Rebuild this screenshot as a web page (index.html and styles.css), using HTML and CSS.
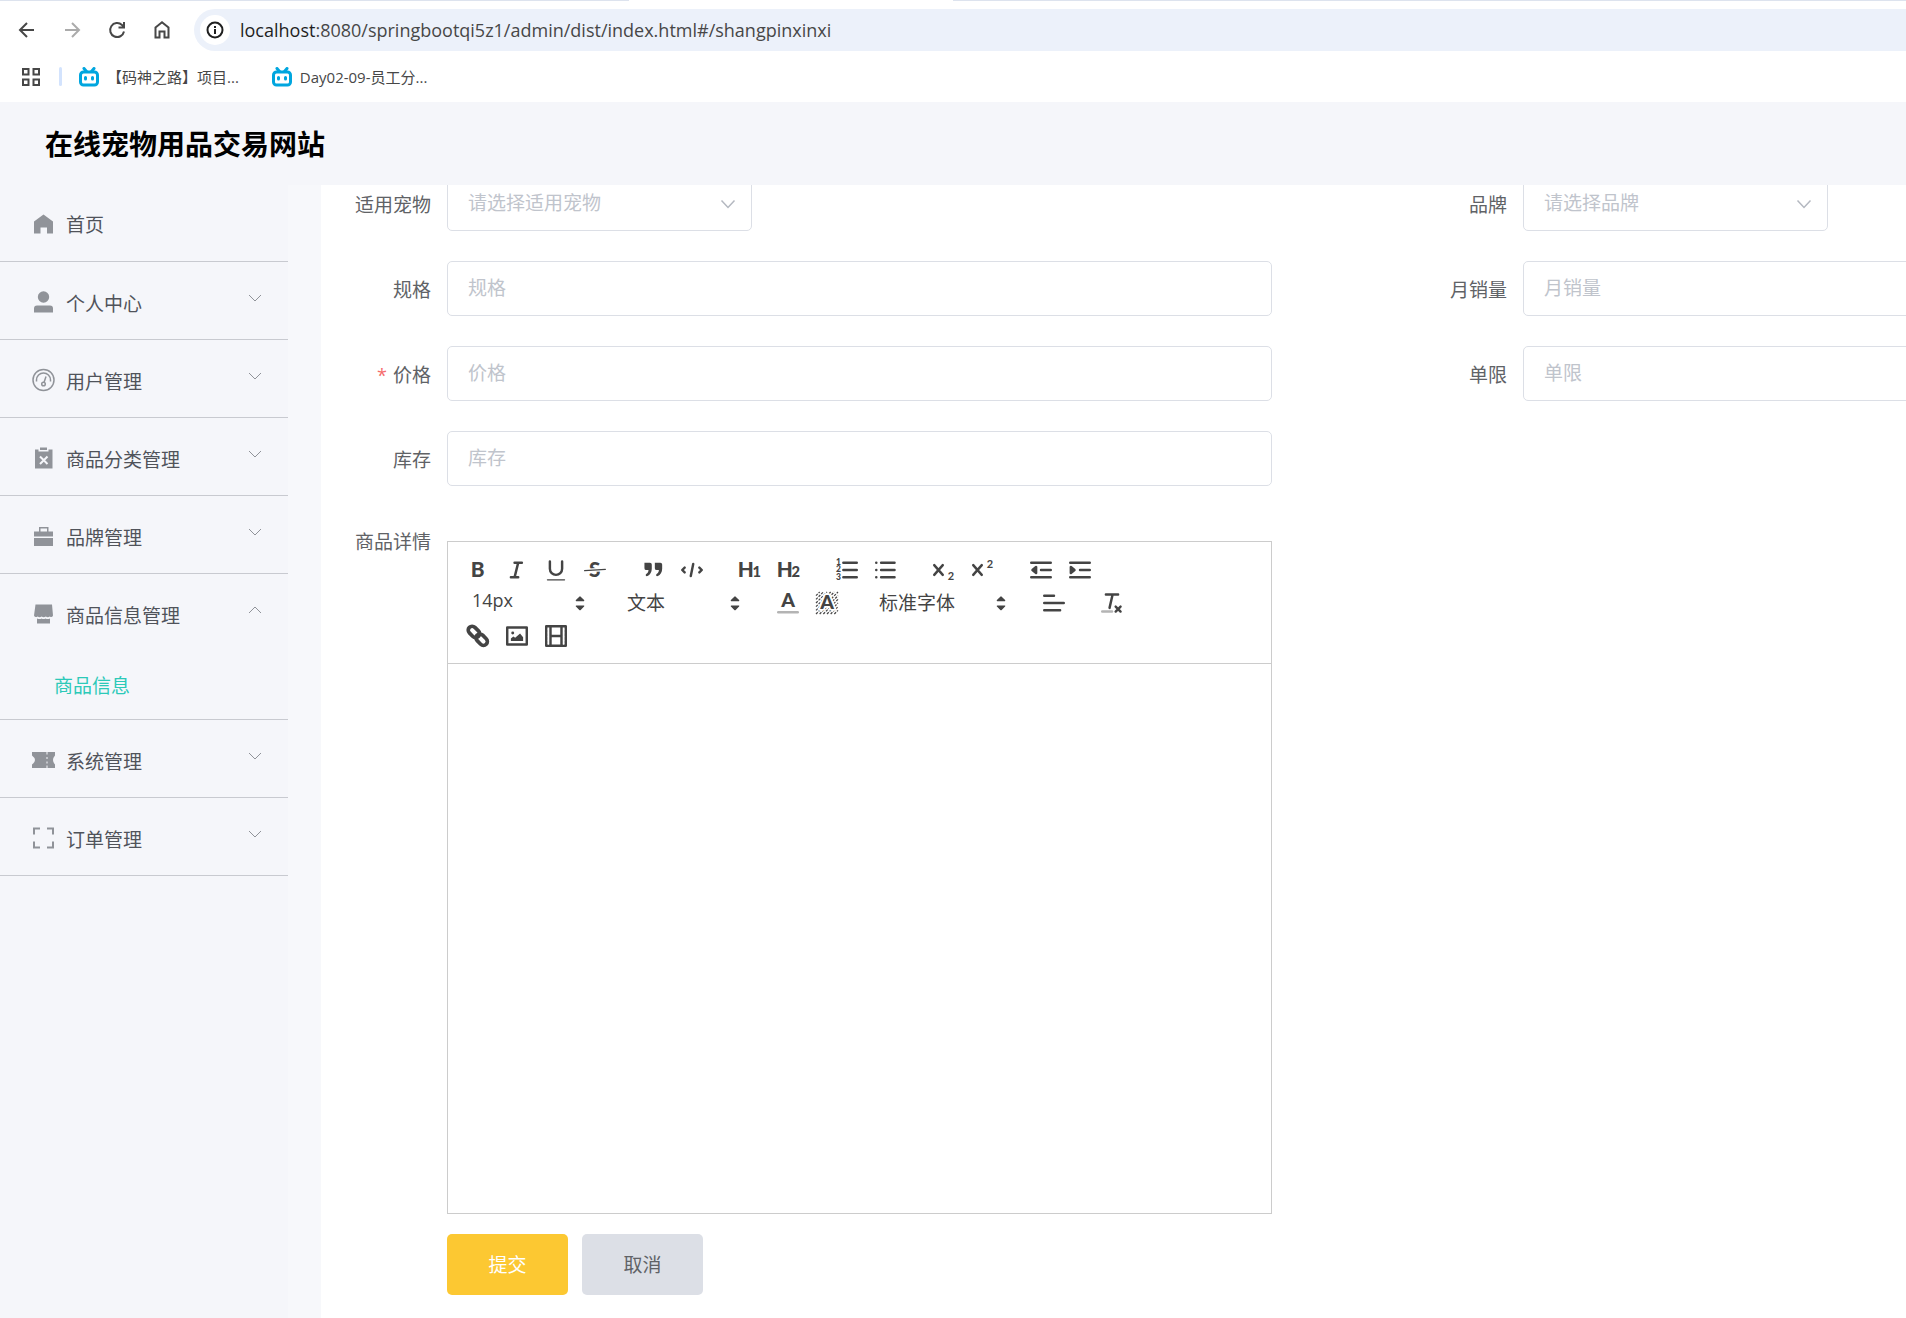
FILE: index.html
```html
<!DOCTYPE html>
<html lang="zh-CN">
<head>
<meta charset="utf-8">
<title>在线宠物用品交易网站</title>
<link rel="stylesheet" href="styles.css">
</head>
<body>
<div class="browser">
  <div class="tabstrip"><span class="tab-edge"></span></div>
  <div class="toolbar">
    <button class="nav-btn" aria-label="后退"><svg width="20" height="20" viewBox="0 0 20 20"><path d="M17 10H3.500M10 3 3 10l7 7"/></svg></button>
    <button class="nav-btn nav-off" aria-label="前进"><svg width="20" height="20" viewBox="0 0 20 20"><path d="M3 10h13.500M10 3l7 7-7 7"/></svg></button>
    <button class="nav-btn" aria-label="刷新"><svg width="20" height="20" viewBox="0 0 20 20"><path d="M17 11.500A7 7 0 1 1 15 5l1.500 1.500M17 2v5.500h-5.500"/></svg></button>
    <button class="nav-btn" aria-label="主页"><svg width="20" height="20" viewBox="0 0 20 20"><path d="M3.500 7.500 10 2.200l6.500 5.300V17.500H12.500v-6h-5v6H3.500z"/></svg></button>
    <div class="address">
      <span class="site-info"><svg width="18" height="18" viewBox="0 0 18 18"><circle cx="9" cy="9" r="7.500"/><path d="M9 8v5M9 5v2"/></svg></span>
      <span class="url"><b>localhost</b>:8080/springbootqi5z1/admin/dist/index.html#/shangpinxinxi</span>
    </div>
  </div>
  <div class="bookmarks">
    <button class="apps" aria-label="应用"><svg width="20" height="20" viewBox="0 0 20 20"><path d="M2 2h5.500v5.500H2zM12.500 2H18v5.500h-5.500zM2 12.500h5.500V18H2zM12.500 12.500H18V18h-5.500z"/></svg></button>
    <span class="divider"></span>
    <a class="bookmark" href="#"><svg width="20" height="20" viewBox="0 0 20 20"><rect x="1.500" y="5" width="17" height="13" rx="3"/><path d="M5 1.500 7.500 4.500M15 1.500 12.500 4.500M6.500 10.500v1.500M13.500 10.500v1.500"/></svg><span>【码神之路】项目...</span></a>
    <a class="bookmark" href="#"><svg width="20" height="20" viewBox="0 0 20 20"><rect x="1.500" y="5" width="17" height="13" rx="3"/><path d="M5 1.500 7.500 4.500M15 1.500 12.500 4.500M6.500 10.500v1.500M13.500 10.500v1.500"/></svg><span>Day02-09-员工分...</span></a>
  </div>
</div>

<header class="site-header"><h1>在线宠物用品交易网站</h1></header>

<div class="shell">
  <nav class="sidebar">
    <a class="item" href="#"><svg class="ico" viewBox="0 0 24 24"><path d="M2 9.500 11.500 2.500 21 9.500V21.500H15V15.500H8.500V21.500H2z"/></svg><span>首页</span></a>
    <a class="item" href="#"><svg class="ico" viewBox="0 0 24 24"><circle cx="11.500" cy="7" r="5.700"/><path d="M2 22.500V18.500a3 3 0 0 1 3-3h13A3 3 0 0 1 21 18.500v4z"/></svg><span>个人中心</span><svg class="chev" viewBox="0 0 14 14"><path d="M1 4l6 6 6-6"/></svg></a>
    <a class="item" href="#"><svg class="ico line" viewBox="0 0 24 24"><circle cx="11.500" cy="12" r="10.500"/><path d="M4.500 13.500V12a7 7 0 0 1 14 0v1.500M14 8.500 12 14.500"/><circle cx="11.500" cy="16" r="1.800"/></svg><span>用户管理</span><svg class="chev" viewBox="0 0 14 14"><path d="M1 4l6 6 6-6"/></svg></a>
    <a class="item" href="#"><svg class="ico" viewBox="0 0 24 24"><path d="M8 1.500h7V4H8zM3 3.500h3.500v2h10v-2H20.500v19H3z"/><path class="cut" d="M8 10.500l7.500 7.500M15.500 10.500 8 18"/></svg><span>商品分类管理</span><svg class="chev" viewBox="0 0 14 14"><path d="M1 4l6 6 6-6"/></svg></a>
    <a class="item" href="#"><svg class="ico" viewBox="0 0 24 24"><path d="M7 7.500V3h9.500v4.500H21v5H2v-5zM8.500 7.500H15v-3H8.500zM2 14h19v8H2z" fill-rule="evenodd"/></svg><span>品牌管理</span><svg class="chev" viewBox="0 0 14 14"><path d="M1 4l6 6 6-6"/></svg></a>
    <a class="item open" href="#"><svg class="ico" viewBox="0 0 24 24"><path d="M3.500 2.500h16.500L21 13.500q-1 2.500-3.200 1-2 1.500-4 0-2.200 1.500-4.200 0-2 1.500-4 0-2.600 1.500-3.600-1zM5 16.500q3 1 4.500 0 2 1 4 0 2 1 4.500 0V21.500H5z"/></svg><span>商品信息管理</span><svg class="chev" viewBox="0 0 14 14"><path d="M1 10l6-6 6 6"/></svg></a>
    <a class="subitem" href="#">商品信息</a>
    <a class="item" href="#"><svg class="ico" viewBox="0 0 24 24"><path d="M0 4h14.500v2.500h1V4H23v3.500q-4 4.500 0 9V20h-7.500v-2.500h-1V20H0v-3.500q6-4.500 0-9zM14.500 9v2h1V9zM14.500 13.500v2h1v-2z" fill-rule="evenodd"/></svg><span>系统管理</span><svg class="chev" viewBox="0 0 14 14"><path d="M1 4l6 6 6-6"/></svg></a>
    <a class="item" href="#"><svg class="ico frame" viewBox="0 0 24 24"><path d="M2 8.500V2.500h6M15 2.500h6v6M21 15.500v6h-6M8 21.500H2v-6"/></svg><span>订单管理</span><svg class="chev" viewBox="0 0 14 14"><path d="M1 4l6 6 6-6"/></svg></a>
  </nav>

  <main class="content">
    <form class="form">
      <div class="field"><label for="pet">适用宠物</label>
        <div class="select-box"><select id="pet"><option>请选择适用宠物</option></select><svg viewBox="0 0 16 16"><path d="M1.500 4.500 8 11.500l6.500-7"/></svg></div></div>
      <div class="field"><label for="brand">品牌</label>
        <div class="select-box"><select id="brand"><option>请选择品牌</option></select><svg viewBox="0 0 16 16"><path d="M1.500 4.500 8 11.500l6.500-7"/></svg></div></div>
      <div class="field"><label for="spec">规格</label><input id="spec" type="text" placeholder="规格"></div>
      <div class="field"><label for="sales">月销量</label><input id="sales" type="text" placeholder="月销量"></div>
      <div class="field"><label class="required" for="price">价格</label><input id="price" type="text" placeholder="价格"></div>
      <div class="field"><label for="limit">单限</label><input id="limit" type="text" placeholder="单限"></div>
      <div class="field wide"><label for="stock">库存</label><input id="stock" type="text" placeholder="库存"></div>

      <div class="field detail"><label for="detail">商品详情</label>
        <div class="editor">
          <div class="tools">
            <div class="tool-row">
              <div class="group">
                <button type="button" aria-label="加粗"><svg viewBox="0 0 18 18"><text class="g" x="3" y="15">B</text></svg></button>
                <button type="button" aria-label="斜体"><svg viewBox="0 0 18 18"><path d="M7 3h6M4 15h6M7 15l3-12"/></svg></button>
                <button type="button" aria-label="下划线"><svg viewBox="0 0 18 18"><path d="M4 2v6a5 5 0 0 0 10 0V2" class="mid"/><path class="thin" d="M2 17h14"/></svg></button>
                <button type="button" aria-label="删除线"><svg viewBox="0 0 18 18"><text class="g" x="4" y="15">S</text><path class="halo" d="M1 9.500l16-1"/><path class="thin" d="M.5 9.500l17-1"/></svg></button>
              </div>
              <div class="group">
                <button type="button" aria-label="引用"><svg viewBox="0 0 18 18"><path class="solid" d="M2 3h4.500a1.500 1.500 0 0 1 1.500 1.500V8c0 3-1.500 5-3.500 6-1.500.4-2-1.300-.8-2C5 11.200 5.300 10.300 5.300 9H3.500A1.500 1.500 0 0 1 2 7.500zM10.500 3H15a1.500 1.500 0 0 1 1.500 1.500V8c0 3-1.500 5-3.500 6-1.500.4-2-1.300-.8-2 1.300-.8 1.600-1.700 1.600-3H12a1.500 1.500 0 0 1-1.500-1.500z"/></svg></button>
                <button type="button" aria-label="代码"><svg viewBox="0 0 18 18"><path d="M3 7 1 9l2 2M15 7l2 2-2 2M10 4 8 14" class="mid"/></svg></button>
              </div>
              <div class="group">
                <button type="button" aria-label="标题一"><svg viewBox="0 0 18 18"><text class="g" x="-1" y="15">H</text><text class="g sm" x="11" y="15">1</text></svg></button>
                <button type="button" aria-label="标题二"><svg viewBox="0 0 18 18"><text class="g" x="-1" y="15">H</text><text class="g sm" x="11" y="15">2</text></svg></button>
              </div>
              <div class="group">
                <button type="button" aria-label="有序列表"><svg viewBox="0 0 18 18"><path class="mid" d="M6 3h11M6 9h11M6 15h11"/><text class="g xs" x="0" y="5">1</text><text class="g xs" x="0" y="11">2</text><text class="g xs" x="0" y="17">3</text></svg></button>
                <button type="button" aria-label="无序列表"><svg viewBox="0 0 18 18"><path class="mid" d="M5 3h11M5 9h11M5 15h11M1 3h.1M1 9h.1M1 15h.1"/></svg></button>
              </div>
              <div class="group">
                <button type="button" aria-label="下标"><svg viewBox="0 0 18 18"><path class="mid" d="M1 5l7 8M8 5l-7 8"/><text class="g idx" x="12" y="17">2</text></svg></button>
                <button type="button" aria-label="上标"><svg viewBox="0 0 18 18"><path class="mid" d="M1 5l7 8M8 5l-7 8"/><text class="g idx" x="12" y="7">2</text></svg></button>
              </div>
              <div class="group">
                <button type="button" aria-label="减少缩进"><svg viewBox="0 0 18 18"><path class="mid" d="M1 3h16M9 9h8M1 15h16"/><path class="solid edge" d="M5 6.500v5L2 9z"/></svg></button>
                <button type="button" aria-label="增加缩进"><svg viewBox="0 0 18 18"><path class="mid" d="M1 3h16M9 9h8M1 15h16"/><path class="solid edge" d="M1.500 6.500v5l3-2.500z"/></svg></button>
              </div>
            </div>
            <div class="tool-row">
              <div class="picker"><select class="latin" aria-label="字号"><option>14px</option></select><svg viewBox="0 0 18 18"><path d="M6 7 9 4l3 3zM6 11.500 9 14.500l3-3z"/></svg></div>
              <div class="picker"><select aria-label="段落"><option>文本</option></select><svg viewBox="0 0 18 18"><path d="M6 7 9 4l3 3zM6 11.500 9 14.500l3-3z"/></svg></div>
              <div class="group">
                <button type="button" aria-label="文字颜色"><svg viewBox="0 0 18 18"><text class="g letter" x="9" y="12">A</text><path class="faint" d="M1 16.500h16"/></svg></button>
                <button type="button" aria-label="背景颜色"><svg viewBox="0 0 18 18"><path class="hatch" d="M0 3l3-3M0 6l6-6M0 9l9-9M0 12 12 0M0 15 15 0M0 18 18 0M3 18 18 3M6 18 18 6M9 18l9-9M12 18l6-6M15 18l3-3"/><text class="g letter outlined" x="9" y="14">A</text></svg></button>
              </div>
              <div class="picker font"><select aria-label="字体"><option>标准字体</option></select><svg viewBox="0 0 18 18"><path d="M6 7 9 4l3 3zM6 11.500 9 14.500l3-3z"/></svg></div>
              <div class="group"><button type="button" aria-label="对齐"><svg viewBox="0 0 18 18"><path class="mid" d="M1 3h8M1 9h16M1 15h13"/></svg></button></div>
              <div class="group"><button type="button" aria-label="清除格式"><svg viewBox="0 0 18 18"><path class="mid" d="M4 2h10M9.500 2 7 13M12 12l4 4M16 12l-4 4"/><path class="faint" d="M1 16h8"/></svg></button></div>
            </div>
            <div class="tool-row">
              <div class="group">
                <button type="button" aria-label="链接"><svg viewBox="0 0 18 18"><g class="chain" transform="rotate(45 9 9)"><rect x="-1" y="5.800" width="10.500" height="6.400" rx="3.200"/><rect x="8" y="5.800" width="10.500" height="6.400" rx="3.200"/></g></svg></button>
                <button type="button" aria-label="图片"><svg viewBox="0 0 18 18"><rect class="mid" x="1" y="2" width="16" height="14"/><circle class="solid" cx="5.500" cy="6.500" r="1.200"/><path class="solid" d="M4 13v-2l2-1.500 1.500 1 4-3.500L14 10v3z"/></svg></button>
                <button type="button" aria-label="视频"><svg viewBox="0 0 18 18"><path class="mid" d="M1 1h16v16H1zM4.500 2v14M13.500 2v14M5 9h8"/><path class="gap" d="M2.800 3v13M15.200 3v13"/></svg></button>
              </div>
            </div>
          </div>
          <textarea id="detail"></textarea>
        </div>
      </div>
      <div class="actions"><button class="btn submit" type="submit">提交</button><button class="btn cancel" type="button">取消</button></div>
    </form>
  </main>
</div>
</body>
</html>
```

FILE: styles.css
```css
* { box-sizing: border-box; }
html, body { height: 100%; }
body {
  margin: 0;
  display: flex;
  flex-direction: column;
  overflow: hidden;
  background: #f5f6fa;
  color: #606266;
  font-family: "Noto Sans CJK SC", "Noto Sans", sans-serif;
  font-size: 19px;
  font-weight: 400;
}
a { color: inherit; text-decoration: none; }
button, input, select, textarea { font: inherit; color: inherit; }
button { padding: 0; border: 0; background: none; }
svg { display: block; flex: none; }

/* browser bars */
.browser { flex: none; background: #fff; }
.tabstrip { display: flex; height: 1px; background: #dde3ee; }
.tab-edge { width: 17%; margin-left: 33%; background: #fff; }
.toolbar { display: flex; align-items: center; padding: 8px 0 0 4px; }
.nav-btn { display: flex; justify-content: center; width: 45px; }
.nav-btn svg, .apps svg { fill: none; stroke: #474747; stroke-width: 2; }
.nav-off svg { stroke: #ababab; }
.address {
  flex: 1;
  display: flex;
  align-items: center;
  gap: 10px;
  height: 42px;
  margin-left: 10px;
  padding-left: 6px;
  border-radius: 21px 0 0 21px;
  background: #ecf1fa;
}
.site-info {
  display: flex;
  align-items: center;
  justify-content: center;
  width: 30px;
  height: 30px;
  border-radius: 50%;
  background: #fff;
}
.site-info svg { fill: none; stroke: #1f1f1f; stroke-width: 2; }
.url { font-family: "Open Sans", "Noto Sans", sans-serif; font-size: 18px; color: #474747; }
.url b { font-weight: 400; color: #1f1f1f; }
.bookmarks {
  display: flex;
  align-items: center;
  height: 51px;
  padding-left: 21px;
  font-family: "Open Sans", "Noto Sans CJK SC", sans-serif;
  font-size: 15px;
  color: #474747;
}
.divider { width: 3px; height: 19px; margin: 0 17px 0 18px; border-radius: 2px; background: #d3e3fd; }
.bookmark { display: flex; align-items: center; gap: 8px; margin-right: 33px; }
.bookmark svg { fill: none; stroke: #00a6df; stroke-width: 3; stroke-linecap: round; }

/* page frame */
.site-header { flex: none; display: flex; align-items: center; height: 83px; padding: 0 0 2px 45px; }
.site-header h1 { margin: 0; font-size: 28px; font-weight: 700; color: #000; }
.shell { flex: 1; display: flex; min-height: 0; background: #f7f8fb; }
.sidebar { flex: none; width: 288px; background: #f5f6fa; color: #50535a; }
.item {
  display: flex;
  align-items: center;
  height: 78px;
  padding: 0 26px 0 32px;
  border-bottom: 1px solid #c8cad0;
}
.item:first-child { height: 77px; }
.item.open { height: 77px; border-bottom: 0; }
.item span { flex: 1; padding-top: 3px; }
.item:first-child span { padding-top: 0; }
.ico { width: 24px; height: 24px; margin: 2px 10px 0 0; fill: #909399; }
.ico .cut { fill: none; stroke: #f5f6fa; stroke-width: 2; }
.ico.line, .ico.frame { fill: none; stroke: #909399; stroke-width: 1.5; }
.ico.frame { stroke-width: 2; }
.chev { width: 14px; height: 14px; margin-bottom: 6px; fill: none; stroke: #909399; stroke-width: 1; }
.subitem {
  display: flex;
  align-items: center;
  height: 69px;
  padding: 0 0 2px 54px;
  border-bottom: 1px solid #c8cad0;
  color: #2cc9b8;
}

/* form */
.content { flex: 1; min-width: 0; margin-left: 33px; overflow: hidden; background: #fff; }
.form {
  display: grid;
  grid-template-columns: repeat(2, 60%);
  gap: 30px 125px;
  margin-top: -9px;
}
.field { display: flex; }
.field label { flex: none; width: 126px; padding-right: 16px; line-height: 55px; text-align: right; }
.required::before { content: "*"; margin-right: 6px; color: #f56c6c; font-family: "Open Sans", sans-serif; font-size: 18px; line-height: 1; }
.field.wide, .field.detail, .actions { grid-column: 1; }
.field input, .select-box select {
  width: 100%;
  height: 55px;
  padding: 0 20px 4px;
  border: 1px solid #dcdfe6;
  border-radius: 5px;
  background: #fff;
}
.field input { flex: 1; min-width: 0; }
.field input::placeholder { color: #c0c4cc; opacity: 1; }
.select-box, .picker { display: grid; align-items: center; }
.select-box { width: 305px; }
.select-box > *, .picker > * { grid-area: 1 / 1; }
.select-box select { appearance: none; color: #c0c4cc; }
.select-box svg { width: 16px; height: 16px; margin-right: 16px; justify-self: end; fill: none; stroke: #b4b8c0; stroke-width: 1.5; pointer-events: none; }

/* rich text editor */
.field.detail label { line-height: 50px; }
.editor { flex: 1; min-width: 0; margin-top: 25px; border: 1px solid #ccc; }
.tools { padding: 11px 12px 11px 13px; border-bottom: 1px solid #ccc; color: #444; }
.tool-row { display: flex; align-items: center; gap: 24px; height: 33px; }
.group { display: flex; gap: 5px; }
.group button { display: flex; align-items: center; justify-content: center; width: 34px; height: 29px; }
.group svg { width: 22px; height: 22px; overflow: visible; fill: none; stroke: #444; stroke-width: 2; stroke-linecap: round; stroke-linejoin: round; }
.group .mid { stroke-width: 2; }
.group .thin { stroke-width: 1; }
.group .faint { stroke-width: 2; stroke: #b4b4b4; }
.group .halo { stroke: #fff; stroke-width: 3; }
.group .hatch { stroke-width: 1; stroke-dasharray: 2 1; stroke-linecap: butt; }
.group .gap { stroke: #fff; stroke-width: 1; stroke-dasharray: 1 2; stroke-linecap: butt; }
.group .solid { fill: #444; stroke-width: 0; }
.group .edge { stroke-width: 2; }
.group .chain { stroke-width: 3; }
.g { fill: #444; stroke: none; font-family: Lato, sans-serif; font-size: 17px; font-weight: 900; }
.g.sm { font-size: 12px; }
.g.xs { font-size: 7px; }
.g.idx { font-size: 9px; font-weight: 700; }
.g.letter { font-size: 16px; text-anchor: middle; }
.g.outlined { stroke: #fff; stroke-width: 3; paint-order: stroke; }
.picker { width: 131px; }
.picker.font { width: 145px; }
.picker select { appearance: none; width: 100%; height: 29px; padding: 0 11px 5px; border: 0; background: none; }
.picker .latin { font-family: "Open Sans", "Noto Sans", sans-serif; font-size: 18px; }
.picker svg { width: 22px; height: 22px; margin-right: 1px; justify-self: end; fill: #444; stroke: #444; stroke-linejoin: round; pointer-events: none; }
.editor textarea { display: block; width: 100%; height: 549px; padding: 14px 18px; border: 0; outline: 0; resize: none; background: #fff; }

.actions { display: flex; gap: 14px; margin-top: -10px; padding-left: 126px; }
.btn { width: 121px; height: 61px; padding-bottom: 2px; border-radius: 5px; }
.submit { background: #fcc832; color: #fff; }
.cancel { background: #dcdfe6; }
```
